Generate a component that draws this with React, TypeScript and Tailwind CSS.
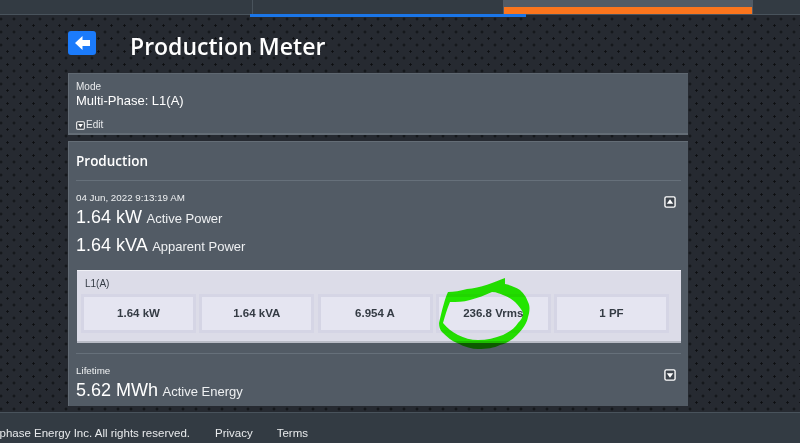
// Production meter page: top tabs, mode panel, production panel, footer.
import React from "react";

const cells = ["1.64 kW", "1.64 kVA", "6.954 A", "236.8 Vrms", "1 PF"];

function ToggleIcon({ up, size = 12 }: { up?: boolean; size?: number }) {
  return (
    <svg viewBox="0 0 13 13" width={size} height={size} className="shrink-0">
      <rect x="1" y="1" width="11" height="11" rx="1.5" fill="#3d444c" stroke="#ffffff" strokeWidth="1.5" />
      <path d={up ? "M6.5 3.5 L10 8.5 H3 Z" : "M3 4.5 H10 L6.5 9.5 Z"} fill="#ffffff" />
    </svg>
  );
}

function Reading({ value, label }: { value: string; label: string }) {
  return (
    <div className="leading-none">
      <span className="text-[18px] text-white">{value}</span>{" "}
      <span className="text-[13px] text-[#eef0f2]">{label}</span>
    </div>
  );
}

export default function App() {
  return (
    <div className="relative flex h-[443px] w-[800px] flex-col overflow-hidden bg-[#262a31] font-['Liberation_Sans',sans-serif] text-white">
      {/* Tab strip */}
      <div className="relative flex h-[15px] shrink-0 border-b border-[#49535c] bg-[#333b43] pl-[3px]">
        <div className="w-[250px] border-r border-[#49535c]" />
        <div className="w-[250px]" />
        <div className="flex h-[14px] w-[250px] flex-col justify-end bg-[#525b65] px-px">
          <div className="h-[7px] bg-[#fb751d]" />
        </div>
        <div className="absolute left-[250px] top-[14px] h-[3px] w-[276px] bg-[#1b76e8]" />
      </div>

      {/* Dotted page body */}
      <div className="flex min-h-0 flex-1 flex-col bg-[#262a31] bg-[radial-gradient(circle,#0c0e10_0.9px,transparent_1.4px),radial-gradient(circle,#0c0e10_0.9px,transparent_1.4px)] bg-[length:13px_13px] bg-[position:-5.5px_-2.5px,1px_4px] pl-[68px]">
        <div className="flex h-[58px] items-start pt-[16px]">
          <button className="flex h-[24px] w-[28px] items-center justify-center rounded-[3px] bg-[#1b7bfb]">
            <svg viewBox="0 0 15 14" width="15" height="14">
              <path d="M0 7 L7.5 0 V4 H15 V10 H7.5 V14 Z" fill="#ffffff" />
            </svg>
          </button>
          <h1 className="ml-[34px] font-['Open_Sans',sans-serif] text-[23px] font-semibold leading-[30px]">
            Production Meter
          </h1>
        </div>

        <section className="flex h-[62px] w-[620px] flex-col border-b-2 border-l border-t border-b-[#646d76] border-l-[#646d76] border-t-[#5f6871] bg-[#525b65] pl-[7px] pt-[6px]">
          <div className="text-[10px] leading-[13px] text-[#e8eaec]">Mode</div>
          <div className="text-[13px] leading-[15px]">Multi-Phase: L1(A)</div>
          <div className="mt-[11px] flex items-center gap-[1px] text-[10px] leading-[12px] text-[#e8eaec]">
            <ToggleIcon size={9} />
            <span>Edit</span>
          </div>
        </section>

        <section className="mt-[6px] h-[265px] w-[620px] border-l border-t border-[#646d76] bg-[#525b65] px-[7px]">
          <h2 className="flex h-[39px] items-center border-b border-[#66707a] pt-px font-['Open_Sans',sans-serif] text-[13.5px] font-semibold">
            Production
          </h2>
          <div className="relative pt-[10px]">
            <div className="text-[9.8px] leading-[13px] text-[#eef0f2]">04 Jun, 2022 9:13:19 AM</div>
            <div className="mt-[4px]">
              <Reading value="1.64 kW" label="Active Power" />
            </div>
            <div className="mt-[10px]">
              <Reading value="1.64 kVA" label="Apparent Power" />
            </div>
            <div className="absolute right-[5px] top-[15px]">
              <ToggleIcon up />
            </div>
          </div>

          <div className="mt-[16px] ml-px h-[73px] border-b-2 border-t border-[#f0f0f6] border-b-[#b9bcc6] bg-[#dcdce8] px-[4px] text-[#343b44]">
            <div className="pl-[4px] pt-[7px] text-[10px] leading-[12px]">L1(A)</div>
            <div className="mt-[4px] grid w-[588px] grid-cols-5 gap-[3.25px]">
              {cells.map((c) => (
                <div
                  key={c}
                  className="flex h-[39px] items-center justify-center border-[3px] border-[#d5d5e5] bg-[#e5e5f1] text-[11.5px] font-bold"
                >
                  {c}
                </div>
              ))}
            </div>
          </div>

          <div className="relative mt-[10px] border-t border-[#66707a] pt-[10px]">
            <div className="text-[9.8px] leading-[13px] text-[#eef0f2]">Lifetime</div>
            <div className="mt-[4px]">
              <Reading value="5.62 MWh" label="Active Energy" />
            </div>
            <div className="absolute right-[5px] top-[15px]">
              <ToggleIcon />
            </div>
          </div>
        </section>
      </div>

      {/* Footer, copyright runs off the left edge */}
      <footer className="relative h-[31px] shrink-0 border-t border-[#49535c] bg-[#333b43] text-[11.5px] text-[#e8eaec]">
        <div className="flex h-full items-center justify-end pr-[492px] pt-[11px] whitespace-nowrap">
          <span>©2022 Enphase Energy Inc. All rights reserved.</span>
          <span className="ml-[25px]">Privacy</span>
          <span className="ml-[24px]">Terms</span>
        </div>
      </footer>

      {/* Hand-drawn green marker ring over the Vrms cell */}
      <svg className="pointer-events-none absolute left-0 top-0 mix-blend-multiply" width="800" height="443" viewBox="0 0 800 443">
        <path
          fillRule="evenodd"
          fill="#27ff00"
          d="M505 278 C 495 282, 480 288, 467 289 C 460 291, 454 292, 448 292 C 445 298, 442 310, 439 323 C 439 327, 440 330, 442 332 C 447 337, 452 341, 457 343 C 465 347, 472 349, 478 349 C 487 349, 494 348, 500 345 C 508 343, 513 339, 517 335 C 523 329, 527 323, 528 317 C 530 310, 530 306, 528 302 C 526 296, 523 293, 520 290 C 515 287, 510 285, 505 284 Z M492 292 C 497 292, 500 294, 503 295 C 508 297, 512 299, 515 302 C 519 306, 522 310, 523 313 C 523 317, 521 320, 518 323 C 514 329, 509 332, 503 335 C 495 338, 487 340, 478 340 C 471 340, 464 338, 458 335 C 452 332, 447 328, 443 323 C 445 316, 447 309, 450 302 C 457 302, 463 302, 470 300 C 478 298, 485 295, 492 292 Z"
        />
      </svg>
    </div>
  );
}
